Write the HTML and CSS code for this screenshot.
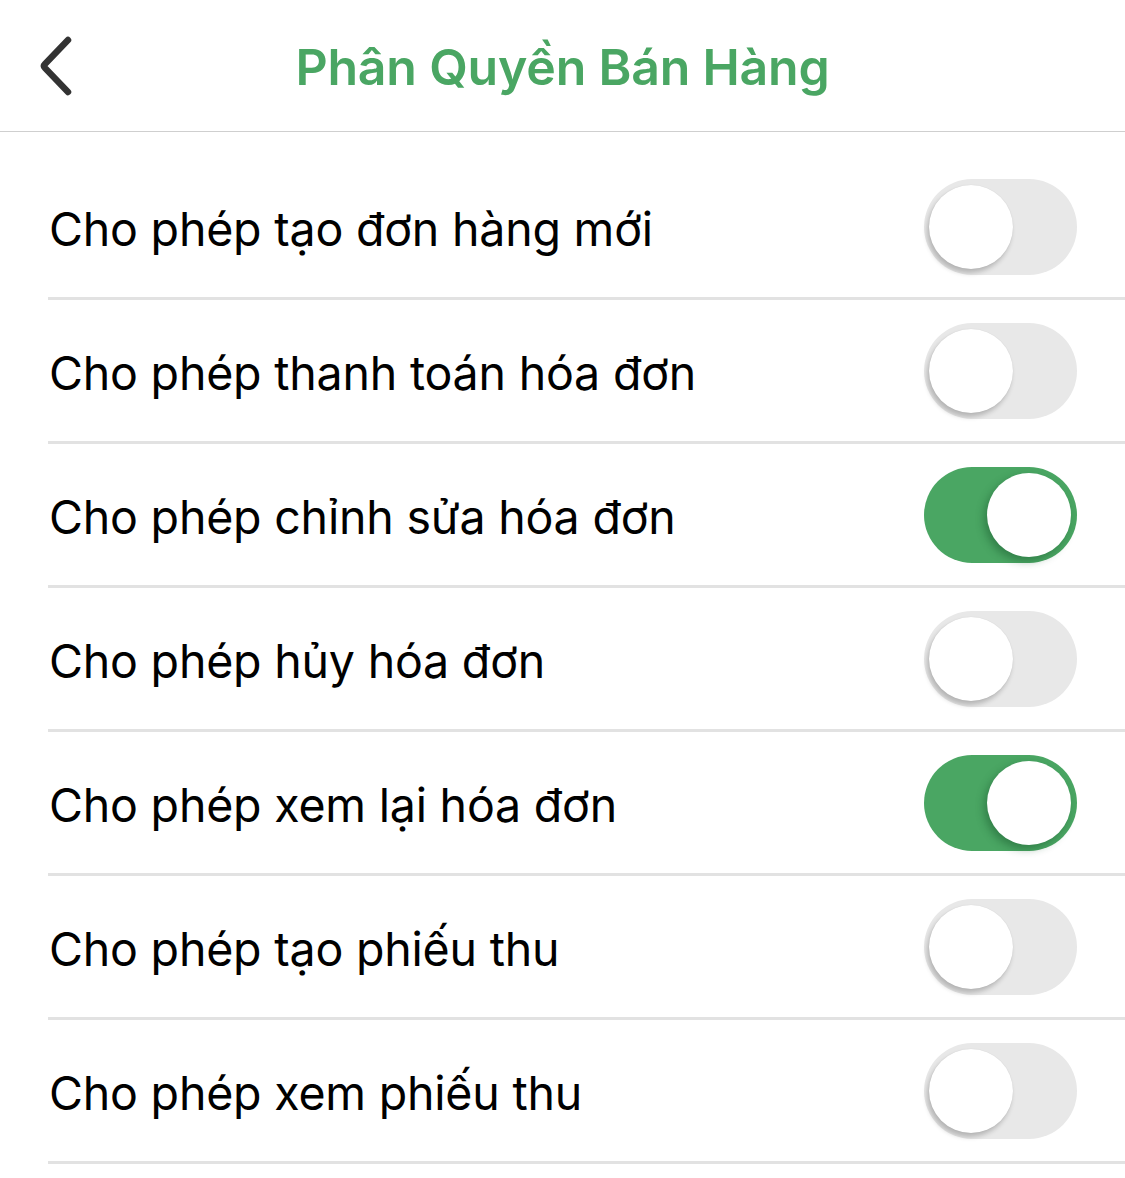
FILE: index.html
```html
<!DOCTYPE html>
<html lang="vi">
<head>
<meta charset="utf-8">
<link rel="stylesheet" href="styles.css">
</head>
<body>
<div class="screen">
  <header class="nav">
    <button class="back" aria-label="Back">
      <svg width="44" height="62" viewBox="0 0 44 62"><path d="M32 5 L9 29 Q7 31 9 33 L32 57" fill="none" stroke="#333" stroke-width="6.5" stroke-linecap="round" stroke-linejoin="round"/></svg>
    </button>
    <h1 class="title">Phân Quyền Bán Hàng</h1>
  </header>
  <ul class="list">
    <li class="row"><span class="label">Cho phép tạo đơn hàng mới</span><span class="switch"></span></li>
    <li class="row"><span class="label">Cho phép thanh toán hóa đơn</span><span class="switch"></span></li>
    <li class="row"><span class="label">Cho phép chỉnh sửa hóa đơn</span><span class="switch on"></span></li>
    <li class="row"><span class="label">Cho phép hủy hóa đơn</span><span class="switch"></span></li>
    <li class="row"><span class="label">Cho phép xem lại hóa đơn</span><span class="switch on"></span></li>
    <li class="row"><span class="label">Cho phép tạo phiếu thu</span><span class="switch"></span></li>
    <li class="row"><span class="label">Cho phép xem phiếu thu</span><span class="switch"></span></li>
  </ul>
</div>
</body>
</html>
```

FILE: styles.css
```css
* { box-sizing: border-box; }
html, body { margin: 0; padding: 0; background: #fff; }
body { font-family: Inter, "Noto Sans", sans-serif; color: #000; }
.screen { width: 1125px; height: 1178px; overflow: hidden; }
.nav {
  height: 132px;
  border-bottom: 1px solid #cfcfcf;
  display: flex;
  align-items: center;
  justify-content: center;
  position: relative;
}
.back {
  position: absolute;
  left: 36px;
  top: 35px;
  width: 44px;
  height: 62px;
  border: 0;
  background: none;
  padding: 0;
}
.back svg { display: block; }
.title {
  margin: 0;
  font-size: 50px;
  font-weight: 600;
  color: #4aa663;
  letter-spacing: -0.2px;
  padding-top: 2px;
}
.list { list-style: none; margin: 0; padding: 24px 0 0 48px; }
.row {
  height: 144px;
  border-bottom: 3px solid #e2e2e2;
  display: flex;
  align-items: center;
  justify-content: space-between;
  padding-right: 48px;
}
.label {
  font-size: 46.5px;
  font-weight: 400;
  letter-spacing: -0.2px;
  padding-left: 1px;
  padding-top: 4px;
}
.switch {
  width: 153px;
  height: 96px;
  border-radius: 48px;
  background: #e8e8e8;
  position: relative;
  margin-top: 0;
}
.switch::after {
  content: "";
  position: absolute;
  left: 5px;
  top: 6px;
  width: 84px;
  height: 84px;
  border-radius: 50%;
  background: #fff;
  box-shadow: -2px 4px 5px rgba(0,0,0,0.22), 0 0 1px rgba(0,0,0,0.12);
}
.switch.on { background: #4aa663; }
.switch.on::after {
  left: 63px;
  top: 6px;
  box-shadow: -3px 4px 8px rgba(20,80,40,0.45);
}
```
